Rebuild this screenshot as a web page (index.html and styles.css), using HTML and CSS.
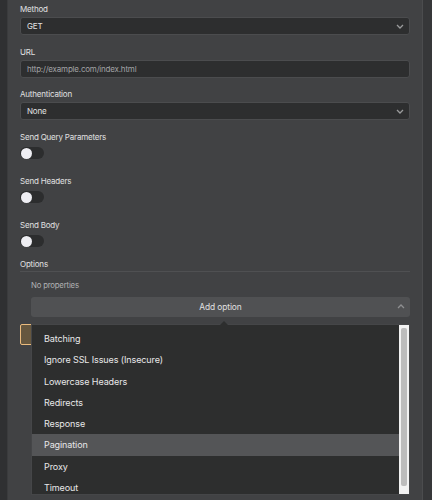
FILE: index.html
```html
<!DOCTYPE html>
<html>
<head>
<meta charset="utf-8">
<link rel="stylesheet" href="styles.css">
</head>
<body>
<div class="shell">
  <div class="edge-left"></div>
  <div class="panel">
    <div class="field">
      <div class="label">Method</div>
      <div class="select"><span>GET</span><svg class="chev" viewBox="0 0 8 5"><path d="M1 1l3 3 3-3" fill="none" stroke="#9a9b9c" stroke-width="1.3"/></svg></div>
    </div>
    <div class="field">
      <div class="label">URL</div>
      <div class="select"><span class="ph">http://example.com/index.html</span></div>
    </div>
    <div class="field">
      <div class="label">Authentication</div>
      <div class="select"><span>None</span><svg class="chev" viewBox="0 0 8 5"><path d="M1 1l3 3 3-3" fill="none" stroke="#9a9b9c" stroke-width="1.3"/></svg></div>
    </div>
    <div class="switch-field first">
      <div class="label">Send Query Parameters</div>
      <div class="toggle"><div class="knob"></div></div>
    </div>
    <div class="switch-field">
      <div class="label">Send Headers</div>
      <div class="toggle"><div class="knob"></div></div>
    </div>
    <div class="switch-field">
      <div class="label">Send Body</div>
      <div class="toggle"><div class="knob"></div></div>
    </div>
    <div class="options-head">Options</div>
    <div class="options-body">
      <div class="noprops">No properties</div>
      <div class="add-wrap">
        <div class="add-btn"><span>Add option</span><svg class="chev up" viewBox="0 0 8 5"><path d="M1 4l3-3 3 3" fill="none" stroke="#8e8f91" stroke-width="1.3"/></svg></div>
        <div class="menu">
          <div class="menu-list">
            <div class="item">Batching</div>
            <div class="item">Ignore SSL Issues (Insecure)</div>
            <div class="item">Lowercase Headers</div>
            <div class="item">Redirects</div>
            <div class="item">Response</div>
            <div class="item active">Pagination</div>
            <div class="item">Proxy</div>
            <div class="item">Timeout</div>
          </div>
          <div class="scrollbar"><div class="thumb"></div></div>
        </div>
      </div>
    </div>
    <div class="notice"></div>
  </div>
  <div class="edge-right"></div>
</div>
</body>
</html>
```
FILE: styles.css
```css
* { box-sizing: border-box; }
html, body { margin: 0; padding: 0; }
body {
  width: 432px;
  height: 500px;
  overflow: hidden;
  background: #414244;
  font-family: Inter, "Noto Sans", sans-serif;
  color: #d6d6d7;
}
.shell {
  display: flex;
  height: 500px;
}
.edge-left {
  width: 8px;
  flex: none;
  background: #2f3032;
  border-right: 1px solid #3a3b3d;
}
.edge-right {
  width: 10px;
  flex: none;
  background: #363739;
  border-left: 1px solid #4b4c4e;
}
.panel {
  flex: 1;
  background: #414244;
  padding: 2px 12px 0 12px;
  display: flex;
  flex-direction: column;
}
.label {
  font-size: 8px;
  line-height: 14px;
  letter-spacing: -0.2px;
  color: #e0e0e1;
}
.field { margin-bottom: 9.5px; }
.field .label { margin-bottom: 1px; }
.select {
  height: 18px;
  background: #2d2e2f;
  border: 1px solid #4b4c4e;
  border-radius: 3px;
  display: flex;
  align-items: center;
  justify-content: space-between;
  padding: 0 5px 0 6px;
  font-size: 8px;
  letter-spacing: -0.2px;
  color: #e2e2e3;
}
.select .ph { color: #a2a3a5; }
.chev { width: 8px; height: 5px; display: block; }
.switch-field { margin-bottom: 15px; }
.switch-field.first { margin-top: 0.5px; }
.switch-field .label { margin-bottom: 3px; }
.toggle {
  width: 24px;
  height: 12px;
  border-radius: 6px;
  background: #2c2d2e;
  padding: 0.5px;
}
.knob {
  width: 11px;
  height: 11px;
  border-radius: 50%;
  background: #eeeef3;
}
.options-head {
  margin-top: -4px;
  font-size: 8px;
  letter-spacing: -0.2px;
  line-height: 13px;
  color: #e0e0e1;
  border-bottom: 1px solid #4f5052;
}
.options-body {
  padding-left: 11px;
}
.noprops {
  margin-top: 6px;
  font-size: 7.8px;
  letter-spacing: -0.2px;
  line-height: 14px;
  color: #b0b1b2;
}
.add-wrap {
  position: relative;
  margin-top: 5px;
}
.add-btn {
  height: 19.5px;
  background: #505153;
  border-radius: 3px;
  display: flex;
  align-items: center;
  justify-content: center;
  position: relative;
  font-size: 8.4px;
  letter-spacing: -0.1px;
  color: #e0e0e1;
}
.add-btn .up {
  position: absolute;
  right: 5px;
  top: 7px;
}
.menu {
  position: absolute;
  left: 0;
  right: 0;
  top: 26.5px;
  height: 171px;
  background: #2d2e2e;
  border: 1px solid #454648;
  display: flex;
  z-index: 2;
}
.menu::before {
  content: "";
  position: absolute;
  top: -4px;
  left: 188px;
  border-left: 4px solid transparent;
  border-right: 4px solid transparent;
  border-bottom: 4px solid #2d2e2e;
}
.menu-list {
  flex: 1;
  padding-top: 3.5px;
}
.item {
  height: 21.3px;
  line-height: 21.3px;
  padding-left: 12px;
  font-size: 9px;
  letter-spacing: -0.1px;
  color: #e8e8e9;
}
.item.active { background: #545557; }
.scrollbar {
  width: 10px;
  flex: none;
  background: #f2f2f2;
  padding: 3px 2px 8px 2px;
}
.thumb {
  height: 100%;
  background: #bcbcbc;
  border-radius: 2px;
}
.notice {
  margin-top: 7.5px;
  height: 21px;
  width: 100%;
  background: #66573f;
  border: 1px solid #ebbb7e;
  border-radius: 2px;
}
```
